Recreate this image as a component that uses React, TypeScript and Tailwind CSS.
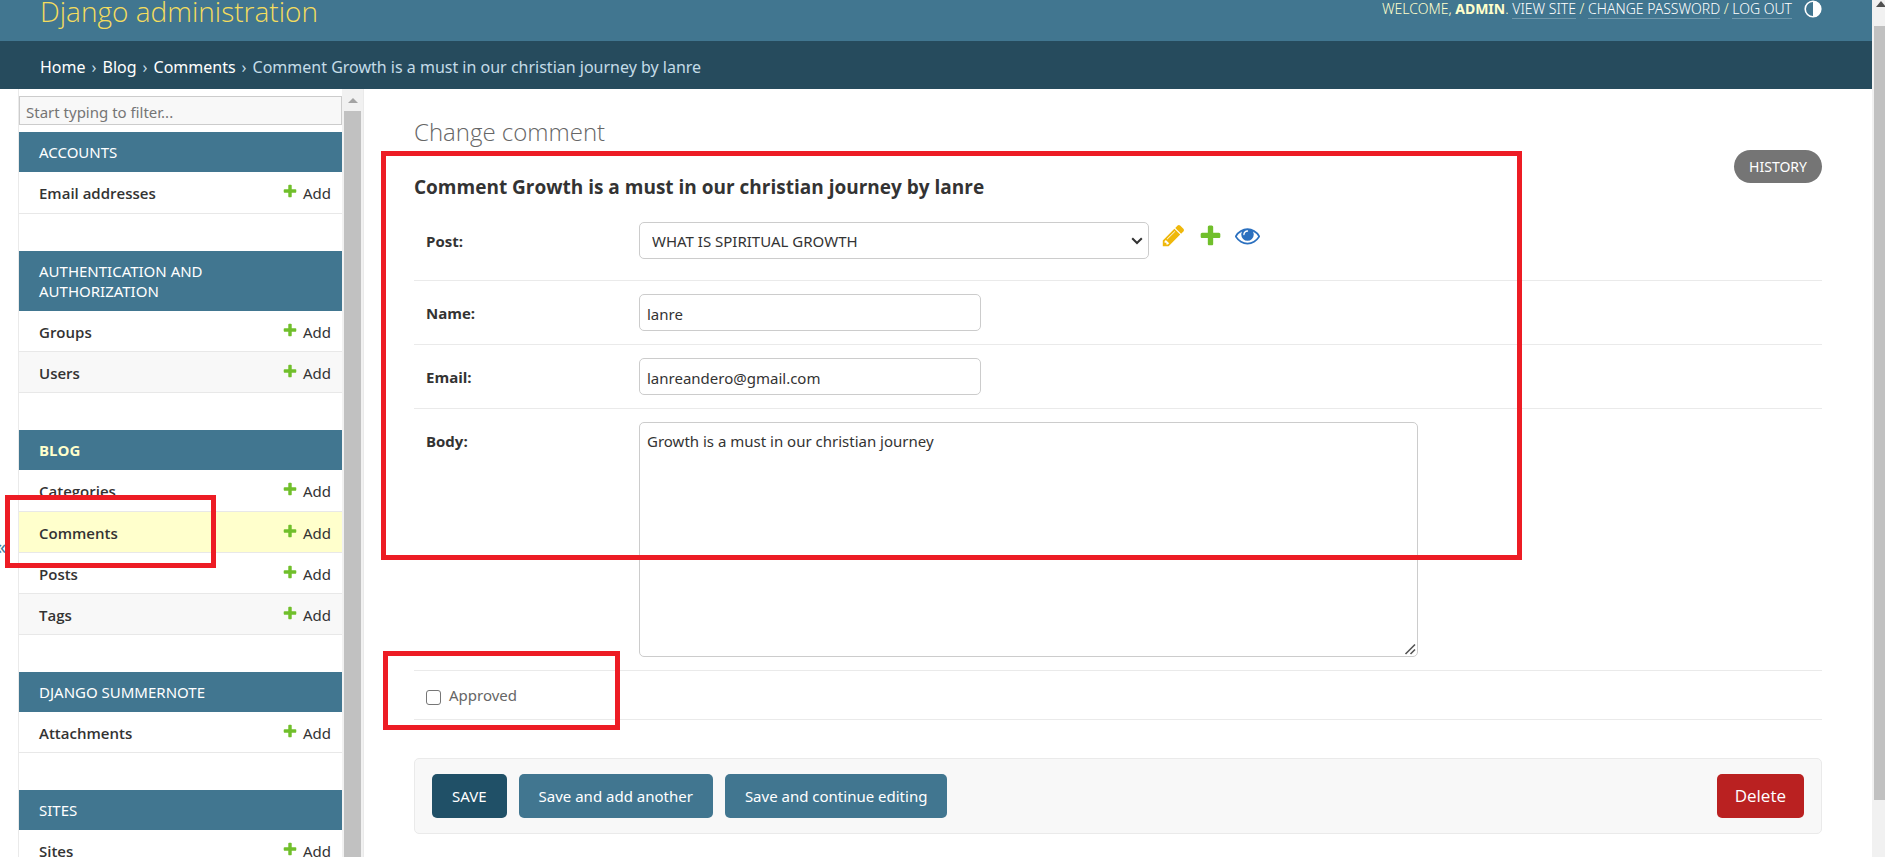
import { useState } from "react";

const ADD_PATH =
  "M1600 796v192q0 40-28 68t-68 28h-416v416q0 40-28 68t-68 28H800q-40 0-68-28t-28-68v-416H288q-40 0-68-28t-28-68V796q0-40 28-68t68-28h416V284q0-40 28-68t68-28h192q40 0 68 28t28 68v416h416q40 0 68 28t28 68z";
const CHANGE_PATH =
  "M491 1536l91-91-235-235-91 91v107h128v128h107zm523-928q0-22-22-22-10 0-17 7l-542 542q-7 7-7 17 0 22 22 22 10 0 17-7l542-542q7-7 7-17zm-54-192l416 416-832 832H128v-416zm683 96q0 53-37 90l-166 166-416-416 166-165q36-38 90-38 53 0 91 38l235 234q37 39 37 91z";
const VIEW_PATH =
  "M1664 960q-152-236-381-353 61 104 61 225 0 185-131.5 316.5T896 1280t-316.5-131.5T448 832q0-121 61-225-229 117-381 353 133 205 333.5 326.5T896 1408t434.5-121.5T1664 960zM944 576q0-20-14-34t-34-14q-125 0-214.5 89.5T592 832q0 20 14 34t34 14 34-14 14-34q0-86 61-147t147-61q20 0 34-14t14-34zm848 384q0 34-20 69-140 230-376.5 368.5T896 1536t-499.5-139T20 1029Q0 994 0 960t20-69q140-229 376.5-368T896 384t499.5 139T1772 891q20 35 20 69z";

function Glyph({ path, className }: { path: string; className: string }) {
  return (
    <svg viewBox="0 0 1792 1792" className={className} fill="currentColor" aria-hidden="true">
      <path d={path} />
    </svg>
  );
}

type Model = { name: string; shaded?: boolean; current?: boolean };
type AppGroup = { title: string; current?: boolean; models: Model[] };

const APPS: AppGroup[] = [
  { title: "Accounts", models: [{ name: "Email addresses" }] },
  {
    title: "Authentication and Authorization",
    models: [{ name: "Groups" }, { name: "Users", shaded: true }],
  },
  {
    title: "Blog",
    current: true,
    models: [
      { name: "Categories" },
      { name: "Comments", current: true },
      { name: "Posts" },
      { name: "Tags", shaded: true },
    ],
  },
  { title: "Django Summernote", models: [{ name: "Attachments" }] },
  { title: "Sites", models: [{ name: "Sites" }] },
];

function Header() {
  return (
    <header className="flex h-[41px] shrink-0 items-start justify-between overflow-hidden bg-[#417690] pl-10 pr-[50px] text-[#ffc]">
      <h1 className="font-['Open_Sans',sans-serif] text-[28px] leading-[22px] font-light text-[#f5dd5d]">
        <a href="#">Django administration</a>
      </h1>
      <div className="flex items-start gap-3 text-[14px] leading-[18px] font-light uppercase">
        <div>
          Welcome, <strong className="font-bold">admin</strong>.{" "}
          <a href="#" className="border-b border-white/25 text-white">View site</a> /{" "}
          <a href="#" className="border-b border-white/25 text-white">Change password</a> /{" "}
          <a href="#" className="border-b border-white/25 text-white">Log out</a>
        </div>
        <button type="button" aria-label="Toggle theme" className="text-white">
          <svg viewBox="0 0 18 18" className="size-[18px]" aria-hidden="true">
            <circle cx="9" cy="9" r="7.8" fill="none" stroke="currentColor" strokeWidth="1.6" />
            <path d="M9 1a8 8 0 0 1 0 16z" fill="currentColor" />
          </svg>
        </button>
      </div>
    </header>
  );
}

function Breadcrumbs() {
  return (
    <nav className="flex h-12 shrink-0 items-center gap-1.5 bg-[#264b5d] px-10 pt-[3px] text-base text-[#c4dce8]">
      <a href="#" className="text-white">Home</a>
      <span>›</span>
      <a href="#" className="text-white">Blog</a>
      <span>›</span>
      <a href="#" className="text-white">Comments</a>
      <span>›</span>
      <span>Comment Growth is a must in our christian journey by lanre</span>
    </nav>
  );
}

function AppTable({ group }: { group: AppGroup }) {
  return (
    <table className="w-full border-collapse">
      <caption
        className={
          group.current
            ? "bg-[#417690] py-2.5 pr-24 pl-5 text-left font-['Open_Sans',sans-serif] text-[15px] leading-5 font-bold text-[#ffc] uppercase"
            : "bg-[#417690] py-2.5 pr-24 pl-5 text-left text-[15px] leading-5 text-white uppercase"
        }
      >
        <a href="#">{group.title}</a>
      </caption>
      <tbody>
        {group.models.map((model) => (
          <tr
            key={model.name}
            className={
              model.current
                ? "h-[41px] border-b border-[#e8e8e8] bg-[#ffc]"
                : model.shaded
                  ? "h-[41px] border-b border-[#e8e8e8] bg-[#f8f8f8]"
                  : "h-[41px] border-b border-[#e8e8e8]"
            }
          >
            <th
              scope="row"
              className="pt-0.5 pl-5 text-left font-['Open_Sans',sans-serif] text-[15px] leading-5 font-semibold"
            >
              <a href="#">{model.name}</a>
            </th>
            <td className="pt-0.5 pr-[11px] text-[15px] leading-5">
              <a href="#" className="flex items-start justify-end gap-[5px]">
                <Glyph path={ADD_PATH} className="size-4 text-[#70bf2b]" />
                Add
              </a>
            </td>
          </tr>
        ))}
      </tbody>
    </table>
  );
}

function Sidebar() {
  return (
    <aside className="flex shrink-0">
      <button
        type="button"
        aria-label="Toggle navigation"
        className="flex w-[19px] items-center border-r border-[#eaeaea] pt-[148px] text-xl text-[#447e9b]"
      >
        <span className="-ml-1">«</span>
      </button>
      <div className="w-[323px] pt-[7px]">
        <input
          type="search"
          aria-label="Filter navigation items"
          placeholder="Start typing to filter..."
          className="block h-[29px] w-full border border-[#ccc] bg-[#f8f8f8] px-1.5 pt-0.5 text-[15px] placeholder:text-[#757575]"
        />
        <div className="mt-[7px] flex flex-col gap-[37px]">
          {APPS.map((group) => (
            <AppTable key={group.title} group={group} />
          ))}
        </div>
      </div>
      <div className="flex w-[22px] flex-col border-r border-[#eaeaea] bg-[#f1f1f1] pt-px pr-[2px] pl-[2px]">
        <div className="flex h-[21px] shrink-0 items-center justify-center">
          <svg viewBox="0 0 10 5" className="h-[5px] w-2.5" aria-hidden="true">
            <path d="M0 5 5 0l5 5z" fill="#a3a3a3" />
          </svg>
        </div>
        <div className="w-[17px] flex-1 bg-[#c1c1c1]" />
      </div>
    </aside>
  );
}

const ROW = "flex items-start border-b border-[#eaeaea] px-3 py-[13px]";
const LABEL = "w-[213px] shrink-0 pt-[9px] font-['Open_Sans',sans-serif] text-[15px] leading-5 font-bold";
const FIELD = "rounded-[5px] border border-[#ccc] bg-white text-[15px]";
const SUBMIT = "h-11 rounded-[5px] px-5 text-[15px] text-white";

function CommentForm() {
  const [name, setName] = useState("lanre");
  const [email, setEmail] = useState("lanreandero@gmail.com");
  const [body, setBody] = useState("Growth is a must in our christian journey");
  const [approved, setApproved] = useState(false);

  return (
    <form className="mt-2" onSubmit={(event) => event.preventDefault()}>
      <div className="flex items-start border-b border-[#eaeaea] px-3 pt-[13px] pb-[21px]">
        <label htmlFor="post" className={LABEL}>Post:</label>
        <div className="flex items-start gap-3">
          <div className="relative">
            <select
              id="post"
              className="h-[37px] w-[510px] appearance-none rounded-[5px] border border-[#ccc] bg-white px-3 pt-0.5 text-[15px]"
            >
              <option>WHAT IS SPIRITUAL GROWTH</option>
            </select>
            <svg viewBox="0 0 12 8" className="pointer-events-none absolute top-[15px] right-1.5 h-2 w-3" aria-hidden="true">
              <path d="M1.2 1.2 6 6l4.800-4.800" fill="none" stroke="#333" strokeWidth="2" />
            </svg>
          </div>
          <div className="flex gap-3 pt-px">
            <a href="#" aria-label="Change selected post"><Glyph path={CHANGE_PATH} className="size-[25px] text-[#efb80b]" /></a>
            <a href="#" aria-label="Add another post"><Glyph path={ADD_PATH} className="size-[25px] text-[#70bf2b]" /></a>
            <a href="#" aria-label="View selected post"><Glyph path={VIEW_PATH} className="size-[25px] text-[#2b70bf]" /></a>
          </div>
        </div>
      </div>
      <div className={ROW}>
        <label htmlFor="name" className={LABEL}>Name:</label>
        <input
          id="name"
          value={name}
          onChange={(event) => setName(event.target.value)}
          className={`${FIELD} h-[37px] w-[342px] px-[7px] pt-0.5`}
        />
      </div>
      <div className={ROW}>
        <label htmlFor="email" className={LABEL}>Email:</label>
        <input
          id="email"
          type="email"
          value={email}
          onChange={(event) => setEmail(event.target.value)}
          className={`${FIELD} h-[37px] w-[342px] px-[7px] pt-0.5`}
        />
      </div>
      <div className={ROW}>
        <label htmlFor="body" className={LABEL}>Body:</label>
        <div className="relative">
          <textarea
            id="body"
            value={body}
            onChange={(event) => setBody(event.target.value)}
            className={`${FIELD} block h-[235px] w-[779px] resize px-[7px] py-2 leading-5`}
          />
          <svg viewBox="0 0 12 12" className="pointer-events-none absolute right-0.5 bottom-0.5 size-3" aria-hidden="true">
            <path d="M0 0h12v12H0z" fill="#fff" />
            <path d="M1.500 11 11 1.500M6.500 11 11 6.500" fill="none" stroke="#555" strokeWidth="1.600" />
          </svg>
        </div>
      </div>
      <div className="flex h-[49px] items-center gap-2 border-b border-[#eaeaea] px-3">
        <input
          id="approved"
          type="checkbox"
          checked={approved}
          onChange={(event) => setApproved(event.target.checked)}
          className="mt-1 size-[15px] appearance-none rounded-[3px] border border-[#767676] bg-white checked:bg-[#417690]"
        />
        <label htmlFor="approved" className="text-[15px] leading-5 text-[#666]">Approved</label>
      </div>
      <div className="mt-[38px] flex items-center gap-3 rounded-[5px] border border-[#eaeaea] bg-[#f8f8f8] px-[17px] py-[15px]">
        <button type="submit" className={`${SUBMIT} bg-[#205067] uppercase`}>Save</button>
        <button type="submit" className={`${SUBMIT} bg-[#417690]`}>Save and add another</button>
        <button type="submit" className={`${SUBMIT} bg-[#417690]`}>Save and continue editing</button>
        <a
          href="#"
          className="ml-auto flex h-11 items-center rounded-[5px] bg-[#ba2121] px-[18px] font-['Open_Sans',sans-serif] text-[17px] text-white"
        >
          Delete
        </a>
      </div>
    </form>
  );
}

export default function App() {
  return (
    <div className="relative flex h-screen overflow-hidden bg-white font-['Noto_Sans','Open_Sans',sans-serif] text-[#333]">
      <div className="flex min-w-0 flex-1 flex-col">
        <Header />
        <Breadcrumbs />
        <div className="flex min-h-0 flex-1 overflow-hidden">
          <Sidebar />
          <main className="min-w-0 flex-1 pt-[27px] pr-[50px] pl-[50px]">
            <div className="flex items-start justify-between">
              <div className="font-['Open_Sans',sans-serif]">
                <h2 className="text-[24px] leading-8 font-light text-[#666]">Change comment</h2>
                <h3 className="mt-[25px] text-[19px] leading-7 font-bold">
                  Comment Growth is a must in our christian journey by lanre
                </h3>
              </div>
              <a
                href="#"
                className="mt-[34px] flex h-[33px] items-center rounded-full bg-[#757575] px-[15px] text-[14px] text-white uppercase"
              >
                History
              </a>
            </div>
            <CommentForm />
          </main>
        </div>
      </div>
      <div className="flex w-[13px] shrink-0 flex-col bg-[#f1f1f1]">
        <svg viewBox="0 0 10 6" className="mt-px ml-1 h-1.5 w-2.5 shrink-0" aria-hidden="true">
          <path d="M0 6 5 0l5 6z" fill="#505050" />
        </svg>
        <div className="mt-[19px] ml-0.5 h-[774px] bg-[#c1c1c1]" />
      </div>
      <div className="pointer-events-none absolute top-[495px] left-[5px] h-[73px] w-[211px] border-[5px] border-[#ed1c24]" />
      <div className="pointer-events-none absolute top-[151px] left-[381px] h-[409px] w-[1141px] border-[5px] border-[#ed1c24]" />
      <div className="pointer-events-none absolute top-[651px] left-[383px] h-[79px] w-[237px] border-[5px] border-[#ed1c24]" />
    </div>
  );
}
